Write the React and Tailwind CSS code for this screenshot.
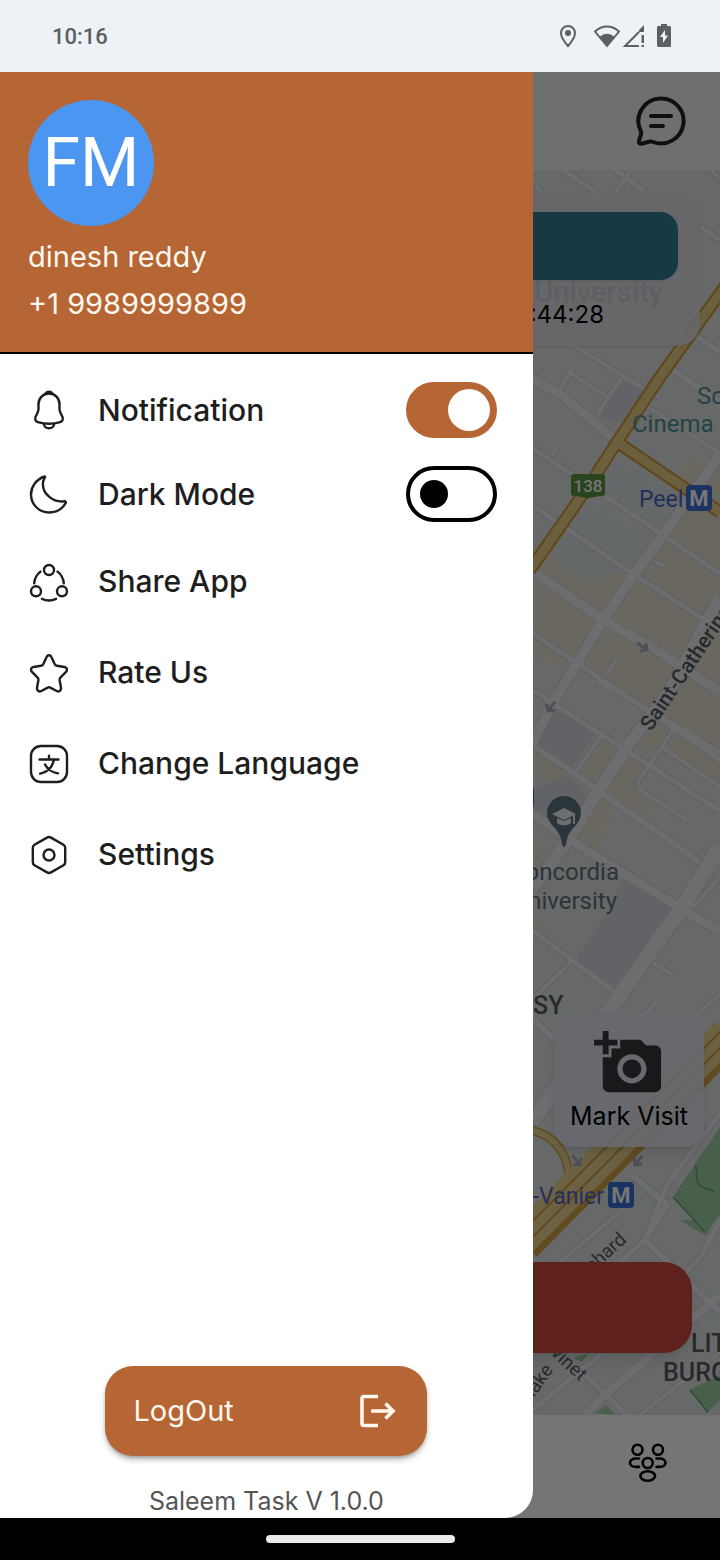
import React, { useState } from 'react'
import { MdAddAPhoto } from 'react-icons/md'

function LineIcon({ children }) {
  return (
    <svg
      viewBox="0 0 42 42"
      className="size-[42px] shrink-0"
      fill="none"
      stroke="currentColor"
      strokeWidth="2.4"
      strokeLinecap="round"
      strokeLinejoin="round"
      aria-hidden="true"
    >
      {children}
    </svg>
  )
}

const icons = {
  bell: (
    <LineIcon>
      <path d="M21 4.500c-6 0-10.500 4.600-10.500 10.500v5c0 1.400-.6 3.200-1.300 4.500l-1.600 3.300c-1.100 2.300-.2 4.600 2.200 5.300 7.300 2.100 15.100 2.100 22.400 0 2.400-.7 3.300-3 2.200-5.300l-1.600-3.300c-.7-1.300-1.300-3.100-1.300-4.500v-5c0-5.900-4.500-10.500-10.500-10.500z" />
      <path d="M26 35.200c0 2.300-2.200 4-5 4s-5-1.700-5-4M17.600 4.800c.5-1.200 1.800-2 3.400-2s2.900.8 3.400 2" />
    </LineIcon>
  ),
  moon: (
    <LineIcon>
      <path d="M16.500 3.500C8 6.500 2.800 14 3 22c.3 10 8.500 17.500 18 17.500 7 0 13.400-3.700 16.600-9.400.6-1.100-.1-2-1.400-1.800-11 1.500-21.500-7.500-21.300-17.500 0-1.800.5-3.600 1.400-5.200.8-1.300.9-2.400.2-2.100z" />
    </LineIcon>
  ),
  share: (
    <LineIcon>
      <circle cx="21" cy="9" r="5" />
      <circle cx="8" cy="30.300" r="5" />
      <circle cx="34" cy="30.300" r="5" />
      <path d="M12.500 10.600c-3.500 2.600-5.900 6.800-6.300 11.700M29.500 10.600c3.500 2.600 5.900 6.800 6.300 11.700M14 37.800c4.400 2.100 9.600 2.100 14 0" />
    </LineIcon>
  ),
  star: (
    <LineIcon>
      <path d="M18.600 5c1-2.300 3.800-2.300 4.800 0l3.400 7.200c.4.8 1.200 1.400 2.100 1.600l7.600 1.200c2.600.4 3.300 3 1.500 4.800l-5.600 5.800c-.7.7-1 1.700-.8 2.600l1.400 7.600c.5 2.600-2 4.400-4.300 3.200l-6.400-3.400c-.8-.5-1.800-.5-2.600 0L13.300 39c-2.300 1.200-4.800-.6-4.300-3.200l1.400-7.600c.2-.9-.1-1.900-.8-2.600L4 19.800c-1.800-1.800-1.100-4.400 1.500-4.800l7.600-1.200c.9-.2 1.700-.8 2.100-1.600z" />
    </LineIcon>
  ),
  language: (
    <LineIcon>
      <rect x="3" y="3" width="36" height="36" rx="10" />
      <path d="M11.500 16.500h19M21 12.800v3.700M25.800 16.800c-1.200 7-6.300 12.200-13.600 13.900M17 21.500c2.500 4.700 7 7.900 13 8.900" />
    </LineIcon>
  ),
  settings: (
    <LineIcon>
      <path d="M19 3.600c1.200-.7 2.800-.7 4 0l12.500 7.200c1 .6 1.700 1.700 1.700 2.900v14.600c0 1.200-.7 2.300-1.700 2.900L23 38.400c-1.200.7-2.800.7-4 0L6.500 31.200c-1-.6-1.700-1.700-1.700-2.900V13.700c0-1.200.7-2.300 1.700-2.900z" />
      <circle cx="21" cy="21" r="5.500" />
    </LineIcon>
  ),
}

const links = [
  { icon: 'share', label: 'Share App' },
  { icon: 'star', label: 'Rate Us' },
  { icon: 'language', label: 'Change Language' },
  { icon: 'settings', label: 'Settings' },
]

// white streets: [width, points]
const streets = [
  [9, '532,378 560,394 617,441'],
  [5, '532,448 590,486 663,535 720,574'],
  [5, '532,505 630,572 720,630'],
  [9, '534,572 603,620 653,648 720,692'],
  [5, '532,633 580,665 640,705 720,760'],
  [5, '597,680 700,740 720,753'],
  [10, '720,455 663,535 630,580 603,620 550,708 532,743'],
  [12, '720,597 670,690 627,747 597,793 570,837 532,889'],
  [5, '532,690 573,716 627,751 720,811'],
  [6, '532,745 573,772 603,794 700,862'],
  [9, '532,813 570,840 680,908 720,932'],
  [15, '720,847 680,910 617,999 532,1122'],
  [5, '532,930 613,991'],
  [4, '653,963 677,978'],
  [4, '687,820 640,790 638,782 673,730'],
  [4, '663,748 720,787'],
  [4, '602,735 577,770'],
  [4, '720,877 693,907'],
  [4, '560,390 570,373 608,397 598,415'],
  [4, '608,397 623,377 647,390'],
  [4, '648,407 720,453'],
  [6, '670,368 720,402'],
  [4, '552,456 557,447'],
  [4, '653,561 665,566'],
  [4, '607,675 616,660'],
  [4, '532,1000 573,960'],
  [5, '563,170 597,193'],
  [4, '532,180 541,192'],
  [5, '615,170 645,191'],
  [4, '630,172 615,193'],
  [5, '700,227 720,240'],
  [4, '707,168 720,178'],
  [4, '573,345 660,398'],
  [4, '573,368 562,384'],
  [5, '696,336 720,352'],
  [6, '532,1018 560,1045'],
  [4, '643,1016 656,1003'],
  [4, '700,1012 720,994'],
  [5, '720,1113 667,1185 645,1240 620,1262'],
  [6, '632,1175 667,1205 645,1240 690,1284 720,1312'],
  [5, '720,1220 700,1258 686,1272'],
  [8, '720,1295 603,1397 585,1415'],
  [5, '575,1365 627,1415'],
  [5, '532,1410 604,1352'],
  [4, '640,1415 720,1352'],
  [6, '700,1110 645,1060'],
  [4, '560,1262 620,1212'],
]

const beige = [
  '532,545 575,533 600,548 640,530 663,500 690,455 720,465 720,760 640,700 597,680 540,660 532,655',
  '577,770 602,735 625,750 600,790',
  '605,790 632,752 655,765 638,783 655,805 645,817',
  '575,835 600,795 617,805 597,852',
  '635,745 660,722 720,762 720,785',
  '532,750 567,772 555,788 532,775',
  '532,835 548,850 534,868',
  '532,915 552,925 540,945 532,940',
]

function OneWay({ x, y, angle }) {
  return (
    <path
      d="M-7 0h11M0 -5l5 5-5 5"
      transform={`translate(${x} ${y}) rotate(${angle})`}
      fill="none"
      stroke="#a9aeb9"
      strokeWidth="3"
    />
  )
}

function MetroSign({ x, y }) {
  return (
    <g>
      <rect x={x} y={y} width="26" height="26" rx="4" fill="#3a6fd8" />
      <text x={x + 13} y={y + 21} textAnchor="middle" fontSize="22" fontWeight="700" fill="#ffffff">M</text>
    </g>
  )
}

function CityMap() {
  return (
    <svg
      viewBox="0 170 720 1245"
      preserveAspectRatio="xMaxYMin slice"
      className="absolute inset-0 size-full font-[Roboto,sans-serif]"
      role="img"
      aria-label="City map"
    >
      <rect y="170" width="720" height="1245" fill="#e0e5e4" />
      {beige.map(points => <polygon key={points} points={points} fill="#e7e0d1" />)}
      <g fill="#d6d8de">
        <polygon points="537,743 553,710 598,730 572,768" />
        <polygon points="623,880 672,908 617,988 575,960 600,925" />
        <polygon points="532,790 570,775 590,800 565,835 532,810" />
        <polygon points="608,397 623,377 645,392 630,425 600,418" />
      </g>
      <g fill="#dae2e4">
        <polygon points="532,515 560,515 600,505 650,535 630,570 590,580 560,565" />
        <polygon points="610,455 650,480 690,500 660,530 600,490" />
      </g>
      <g fill="#9ccfa3">
        <polygon points="720,1127 673,1197 705,1233 720,1215" />
        <polygon points="690,1390 707,1413 720,1400 720,1375" />
        <polygon points="680,1220 706,1236 714,1220" />
        <polygon points="573,1358 590,1352 582,1362" />
        <polygon points="595,1413 606,1405 616,1415" />
      </g>
      <path d="M695 1165c4 8-1 14 4 20 6 5 12 3 16 8M673 1197l32 35M690 1390l18 22" fill="none" stroke="#63a875" strokeWidth="1.500" />

      <g fill="none" stroke="#cdd1d6" strokeLinejoin="round">
        {streets.map(([width, points]) => <polyline key={points} points={points} strokeWidth={width + 2} />)}
      </g>
      <g fill="none" stroke="#edeef2" strokeLinejoin="round">
        {streets.map(([width, points]) => <polyline key={points} points={points} strokeWidth={width} />)}
      </g>

      <g fill="none">
        <path d="M617 442l103 70M726 285l-68 95-41 62-27 42-60 86" stroke="#cf9a3a" strokeWidth="13" />
        <path d="M617 442l103 70M726 285l-68 95-41 62-27 42-60 86" stroke="#ebd086" strokeWidth="9" />
        <path d="M530 1130c30 6 46 34 36 72" stroke="#d3a448" strokeWidth="9" />
        <path d="M530 1130c30 6 46 34 36 72" stroke="#ecd592" strokeWidth="6" />
        <path d="M730 1036L524 1244" stroke="#d3a448" strokeWidth="36" />
        <path d="M719 1025L513 1233M727 1033L521 1241M735 1041L529 1249" stroke="#ecd592" strokeWidth="9" />
      </g>

      <OneWay x={643} y={647} angle={35} />
      <OneWay x={551} y={707} angle={125} />
      <OneWay x={577} y={1161} angle={50} />
      <OneWay x={638} y={1161} angle={130} />

      <text x="663" y="302" textAnchor="end" fontSize="29" fontWeight="500" fill="#6c7074">University</text>
      <g fontSize="24" fill="#4f909b">
        <text x="697" y="404">Sc</text>
        <text x="632" y="432">Cinema</text>
      </g>
      <g fontSize="23" fill="#4c66c4">
        <text x="639" y="507">Peel</text>
        <text x="604" y="1204" textAnchor="end">s-Vanier</text>
      </g>
      <MetroSign x={686} y={485} />
      <MetroSign x={608} y={1182} />
      <rect x="524" y="786" width="10" height="22" rx="3" fill="#3a6fd8" />

      <path d="M574 474h28a3 3 0 0 1 3 3v16c0 2-1 3-3 3-6 0-9 2-14 2s-8-2-14-2c-2 0-3-1-3-3v-16a3 3 0 0 1 3-3z" fill="#5f9447" />
      <text x="588" y="492" textAnchor="middle" fontSize="17" fontWeight="500" fill="#ffffff">138</text>

      <path d="M564 847c-2 0-2-5-4-11-4-9-13-13-13-23a17 17 0 0 1 34 0c0 10-9 14-13 23-2 6-2 11-4 11z" fill="#5f7783" />
      <path d="M552 814l12-6 12 6-12 6zM557 818v5c4 3 10 3 14 0v-5l-7 3zM573 815h2v9h-2z" fill="#eef2f3" />
      <g fontSize="24" textAnchor="end" fill="#5e727c">
        <text x="619" y="880">oncordia</text>
        <text x="617" y="909">niversity</text>
      </g>

      <g fontWeight="500" fill="#565b60">
        <text x="533" y="1014" fontSize="25">SY</text>
        <text x="691" y="1352" fontSize="25">LIT</text>
        <text x="663" y="1381" fontSize="25">BURG</text>
        <text fontSize="21" transform="translate(651 732) rotate(-56)">Saint-Catherine</text>
      </g>
      <g fontSize="19" fill="#565b60">
        <text transform="translate(592 1273) rotate(-42)">chard</text>
        <text transform="translate(550 1354) rotate(43)">vinet</text>
        <text transform="translate(534 1398) rotate(-55)">lake</text>
      </g>
    </svg>
  )
}

function StatusBar() {
  return (
    <header className="flex h-[72px] items-center justify-between bg-[#ecf2f6] pr-[49px] pl-[52px] text-[#5d6062]">
      <time className="font-[Roboto,sans-serif] text-[22px] font-medium">10:16</time>
      <div className="flex items-center">
        <svg viewBox="0 0 18 24" className="mr-4 h-6 w-[18px]" aria-label="Location">
          <path d="M9 2a7 7 0 0 0-7 7c0 5 7 13 7 13s7-8 7-13a7 7 0 0 0-7-7z" fill="none" stroke="currentColor" strokeWidth="2" />
          <circle cx="9" cy="9" r="3" fill="currentColor" />
        </svg>
        <svg viewBox="0 0 28 24" className="h-6 w-7" aria-label="Wi-Fi">
          <path d="M2 7.500C9 .8 19 .8 26 7.500L14 22z" fill="none" stroke="currentColor" strokeWidth="1.800" />
          <path d="M6.500 13c4.500-4.500 10.500-4.500 15 0L14 22z" fill="currentColor" />
        </svg>
        <svg viewBox="0 0 24 24" className="mr-3 h-6 w-6" aria-label="No mobile signal">
          <path d="M18 22H4L18 8" fill="none" stroke="currentColor" strokeWidth="2" />
          <path d="M23 1v7h-5V6zM20.500 11H23v8h-2.500zM20.500 21H23v2h-2.500z" fill="currentColor" />
        </svg>
        <svg viewBox="0 0 14 24" className="h-6 w-[14px]" aria-label="Battery charging">
          <path d="M4 0h6v2h2.500c.8 0 1.500.7 1.500 1.500v18c0 .8-.7 1.500-1.500 1.500h-11C.7 23 0 22.300 0 21.500v-18C0 2.700.7 2 1.500 2H4z" fill="currentColor" />
          <path d="M8 6l-5 7h3v6l5-7.500H8z" fill="#ecf2f6" />
        </svg>
      </div>
    </header>
  )
}

function HomeScreen() {
  return (
    <div className="absolute inset-0 flex flex-col overflow-hidden" aria-hidden="true" inert>
      <div className="flex h-[98px] shrink-0 items-start justify-end bg-[#f0f3f5] pt-6 pr-[34px]">
        <svg viewBox="0 0 50 50" className="size-[50px] text-[#202225]" fill="none" stroke="currentColor" strokeWidth="4" strokeLinecap="round" strokeLinejoin="round">
          <path d="M25 2.500A22.500 22.500 0 1 1 17 46c-1.500-.6-2.800-.7-4-.3l-7.500 2c-1.800.4-3-1-2.500-2.700l2-6.500c.4-1.200.2-2.400-.3-3.600A22.500 22.500 0 0 1 25 2.500z" />
          <path d="M15 20h20M15 30h12" />
        </svg>
      </div>

      <div className="relative flex flex-1 flex-col">
        <CityMap />
        <div className="relative mx-5 mt-[22px] flex h-[154px] flex-col rounded-[22px] bg-[#dfe1e8]/85 px-[22px] pt-5 shadow-sm">
          <div className="h-[68px] rounded-[18px] bg-[#307e92] shadow-sm" />
          <p className="mt-4 pr-[74px] text-right text-2xl leading-[38px] text-black">:44:28</p>
        </div>
        <div className="relative mt-auto mr-4 mb-[115px] flex h-[134px] w-[150px] flex-col items-center self-end rounded-[20px] bg-[#e1e3f0]/90 pt-[15px] shadow-lg">
          <MdAddAPhoto className="size-[70px] text-[#33373b]" />
          <p className="text-[25px] leading-9 text-black">Mark Visit</p>
        </div>
        <div className="relative mx-7 mb-[62px] h-[91px] rounded-[28px] bg-[#ce483d] shadow-lg" />
      </div>

      <div className="flex h-[103px] shrink-0 items-start justify-end bg-white pt-7 pr-[52px]">
        <svg viewBox="0 0 40 40" className="size-10 text-black" fill="none" stroke="currentColor" strokeWidth="2.600" strokeLinecap="round">
          <circle cx="9.500" cy="6.700" r="5" />
          <circle cx="30" cy="6.700" r="5" />
          <circle cx="19.700" cy="20" r="5" />
          <ellipse cx="19.700" cy="33" rx="7.300" ry="4.800" />
          <path d="M11 15.500H8c-3.600 0-6 1.800-6 4.200s2.400 4.200 6 4.200h3M28.500 15.500h3c3.600 0 6 1.800 6 4.200s-2.400 4.200-6 4.200h-3" />
        </svg>
      </div>

      <div className="absolute inset-0 bg-black/54" />
    </div>
  )
}

function SwitchRow({ icon, label, checked, onChange }) {
  return (
    <label className="flex h-[84px] cursor-pointer items-center gap-7 pr-9 pl-7">
      {icons[icon]}
      <span className="flex-1">{label}</span>
      <input
        type="checkbox"
        role="switch"
        checked={checked}
        onChange={e => onChange(e.target.checked)}
        className="flex h-14 w-[91px] cursor-pointer appearance-none items-center rounded-full border-4 border-black bg-white px-[10px] before:size-7 before:rounded-full before:bg-black checked:justify-end checked:border-[#b66535] checked:bg-[#b66535] checked:px-[3px] checked:before:size-[42px] checked:before:bg-white"
      />
    </label>
  )
}

function Drawer() {
  const [notify, setNotify] = useState(true)
  const [dark, setDark] = useState(false)

  return (
    <aside className="relative flex w-[74%] flex-col overflow-hidden rounded-br-[28px] bg-white">
      <div className="border-b-2 border-black bg-[#b66535] px-7 pt-7 pb-[25px] text-[29px] leading-[47px] text-[#fff8ee]">
        <div className="mb-[7px] flex size-[126px] items-center justify-center rounded-full bg-[#4a96f0] font-[Roboto,sans-serif] text-[68px] text-white">
          FM
        </div>
        <p>dinesh reddy</p>
        <p>+1 9989999899</p>
      </div>

      <nav className="flex flex-col pt-[14px] text-[30px] font-medium text-[#1e1e1e]">
        <SwitchRow icon="bell" label="Notification" checked={notify} onChange={setNotify} />
        <SwitchRow icon="moon" label="Dark Mode" checked={dark} onChange={setDark} />
        {links.map(({ icon, label }) => (
          <button key={label} type="button" className="flex h-[91px] cursor-pointer items-center gap-7 px-7 text-left">
            {icons[icon]}
            {label}
          </button>
        ))}
      </nav>

      <div className="mt-auto flex flex-col items-center">
        <button
          type="button"
          className="flex h-[90px] w-[322px] max-w-full cursor-pointer items-center justify-between rounded-[28px] bg-[#b66535] px-7 text-[29px] text-[#fff8ee] shadow-md shadow-black/30"
        >
          LogOut
          <svg viewBox="0 0 42 42" className="size-[42px]" fill="none" stroke="currentColor" strokeWidth="3.600" aria-hidden="true">
            <path d="M21 6.500H7c-1.400 0-2 .6-2 2v25c0 1.400.6 2 2 2h14" />
            <path d="M14 21h22M28.500 13.500L36 21l-7.500 7.500" />
          </svg>
        </button>
        <p className="mt-7 text-[25px] leading-[34px] text-[#555555]">Saleem Task V 1.0.0</p>
      </div>
    </aside>
  )
}

export default function App() {
  return (
    <div className="flex min-h-screen flex-col bg-black font-[Inter,sans-serif]">
      <StatusBar />
      <main className="relative flex flex-1">
        <HomeScreen />
        <Drawer />
      </main>
      <footer className="flex h-[42px] items-center justify-center bg-black">
        <div className="h-2 w-[189px] rounded-full bg-[#ebebeb]" />
      </footer>
    </div>
  )
}
